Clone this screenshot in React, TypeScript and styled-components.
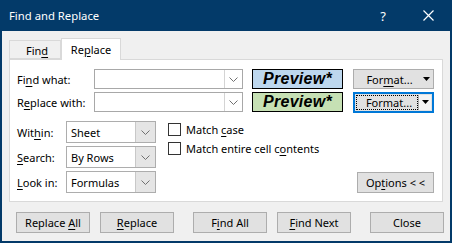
import React from "react"
import styled, { createGlobalStyle } from "styled-components"

const GlobalStyle = createGlobalStyle`
  html, body {
    margin: 0;
    padding: 0;
    background: #ffffff;
  }
  body {
    font-family: "Noto Sans", "Open Sans", sans-serif;
    font-size: 11px;
    color: #000;
  }
  u {
    text-decoration: underline;
    text-underline-offset: 2px;
  }
`

const Window = styled.div`
  width: 452px;
  height: 243px;
  box-sizing: border-box;
  background: #033a69;
  padding: 0 2px 2px 2px;
  display: flex;
  flex-direction: column;
`

const TitleBar = styled.div`
  height: 31px;
  display: flex;
  align-items: center;
  padding-left: 7px;
  color: #ffffff;
  font-size: 11.3px;
`

const Title = styled.div`
  flex: 1;
`

const TitleButton = styled.div<{ $w: number }>`
  width: ${(p) => p.$w}px;
  height: 31px;
  display: flex;
  align-items: center;
  justify-content: center;
  color: #ffffff;
  font-size: 13px;
`

const Body = styled.div`
  flex: 1;
  background: #f0f0f0;
  padding: 7px 6px 8px 7px;
  display: flex;
  flex-direction: column;
`

const Tabs = styled.div`
  height: 21px;
  display: flex;
  align-items: flex-end;
  position: relative;
  z-index: 1;
`

const Tab = styled.div<{ $active?: boolean; $w: number }>`
  width: ${(p) => p.$w}px;
  box-sizing: border-box;
  height: ${(p) => (p.$active ? 22 : 19)}px;
  margin-bottom: ${(p) => (p.$active ? -1 : 0)}px;
  background: ${(p) => (p.$active ? "#ffffff" : "#f0f0f0")};
  border: 1px solid #d9d9d9;
  border-bottom: ${(p) => (p.$active ? "none" : "1px solid #d9d9d9")};
  display: flex;
  align-items: center;
  justify-content: center;
  padding-top: ${(p) => (p.$active ? 0 : 2)}px;
  padding-left: ${(p) => (p.$active ? 0 : 4)}px;
`

const Panel = styled.div`
  width: 434px;
  height: 143px;
  box-sizing: border-box;
  background: #ffffff;
  border: 1px solid #d9d9d9;
  padding: 9px 8px 8px 7px;
  display: flex;
  flex-direction: column;
`

const Row = styled.div<{ $mt?: number }>`
  display: flex;
  align-items: center;
  height: 20px;
  margin-top: ${(p) => p.$mt || 0}px;
`

const Label = styled.div<{ $w: number }>`
  width: ${(p) => p.$w}px;
  white-space: nowrap;
`

const Combo = styled.div`
  width: 149px;
  height: 20px;
  box-sizing: border-box;
  border: 1px solid #a8a8a8;
  background: #ffffff;
  display: flex;
  justify-content: flex-end;
`

const ComboArrow = styled.div`
  width: 18px;
  height: 18px;
  box-sizing: border-box;
  border-left: 1px solid #d4d4d4;
  display: flex;
  align-items: center;
  justify-content: center;
`

const Preview = styled.div<{ $bg: string }>`
  width: 91px;
  height: 20px;
  box-sizing: border-box;
  margin-left: 9px;
  border: 1px solid #000;
  background: ${(p) => p.$bg};
  display: flex;
  align-items: center;
  justify-content: center;
  font-family: "Liberation Sans", Arial, sans-serif;
  font-weight: 700;
  font-style: italic;
  font-size: 16px;
  letter-spacing: 0.3px;
`

const FormatButton = styled.div<{ $focus?: boolean }>`
  width: 81px;
  height: ${(p) => (p.$focus ? 21 : 20)}px;
  box-sizing: border-box;
  margin-left: 10px;
  background: #e1e1e1;
  border: ${(p) => (p.$focus ? "2px solid #0078d7" : "1px solid #adadad")};
  display: flex;
  align-items: center;
  padding: ${(p) => (p.$focus ? "1px" : "0")};
`

const FormatText = styled.div<{ $focus?: boolean }>`
  flex: 1;
  height: 100%;
  box-sizing: border-box;
  display: flex;
  align-items: center;
  justify-content: center;
  padding-left: ${(p) => (p.$focus ? 4 : 6)}px;
  outline: ${(p) => (p.$focus ? "1px dotted #000" : "none")};
  outline-offset: -1px;
`

const FormatArrow = styled.div<{ $focus?: boolean }>`
  width: ${(p) => (p.$focus ? 12 : 14)}px;
  height: 100%;
  display: flex;
  align-items: center;
  justify-content: center;
  border-left: ${(p) => (p.$focus ? "1px solid #adadad" : "none")};
  background: ${(p) => (p.$focus ? "#f4f4f4" : "transparent")};
`

const Lower = styled.div`
  display: flex;
  margin-top: 9px;
  flex: 1;
`

const SelectGrid = styled.div`
  display: grid;
  grid-template-columns: 49px 90px;
  grid-auto-rows: 22px;
  row-gap: 3px;
  align-items: center;
`

const Select = styled.div`
  height: 22px;
  box-sizing: border-box;
  border: 1px solid #adadad;
  background: #ffffff;
  display: flex;
  align-items: center;
`

const SelectText = styled.div`
  flex: 1;
  padding-left: 4px;
`

const SelectArrow = styled.div`
  width: 20px;
  height: 20px;
  box-sizing: border-box;
  background: #e5e5e5;
  border-left: 1px solid #c8c8c8;
  display: flex;
  align-items: center;
  justify-content: center;
`

const Checks = styled.div`
  margin-left: 12px;
  padding-top: 2px;
  display: flex;
  flex-direction: column;
  gap: 6px;
  flex: 1;
`

const CheckRow = styled.div`
  display: flex;
  align-items: center;
  height: 13px;
  gap: 5px;
  white-space: nowrap;
`

const CheckBox = styled.div`
  width: 13px;
  height: 13px;
  box-sizing: border-box;
  border: 1px solid #333333;
  background: #ffffff;
`

const OptionsWrap = styled.div`
  display: flex;
  align-items: flex-end;
`

const Button = styled.div<{ $w: number }>`
  width: ${(p) => p.$w}px;
  height: 21px;
  box-sizing: border-box;
  background: #e1e1e1;
  border: 1px solid #adadad;
  display: flex;
  align-items: center;
  justify-content: center;
  white-space: nowrap;
`

const ButtonRow = styled.div`
  display: flex;
  margin-top: 10px;
  padding-left: 7px;
`

const Gap = styled.div<{ $w: number }>`
  width: ${(p) => p.$w}px;
`

const Chevron = () => (
  <svg width="9" height="5" viewBox="0 0 9 5">
    <path d="M0.5 0.5 L4.5 4.5 L8.5 0.5" fill="none" stroke="#707070" strokeWidth="1" />
  </svg>
)

const DropTri = () => (
  <svg width="7" height="4" viewBox="0 0 7 4">
    <path d="M0 0 H7 L3.5 4 Z" fill="#000" />
  </svg>
)

const App = () => {
  return (
    <>
      <GlobalStyle />
      <Window>
        <TitleBar>
          <Title>Find and Replace</Title>
          <TitleButton $w={20}>?</TitleButton>
          <Gap $w={25} />
          <TitleButton $w={20}>
            <svg width="11" height="11" viewBox="0 0 11 11">
              <path d="M0.5 0.5 L10.5 10.5 M10.5 0.5 L0.5 10.5" stroke="#fff" strokeWidth="1.2" />
            </svg>
          </TitleButton>
          <Gap $w={12} />
        </TitleBar>
        <Body>
          <Tabs>
            <Tab $w={52}>
              <span>
                Fin<u>d</u>
              </span>
            </Tab>
            <Tab $active $w={60}>
              <span>
                Re<u>p</u>lace
              </span>
            </Tab>
          </Tabs>
          <Panel>
            <Row>
              <Label $w={77}>
                Fi<u>n</u>d what:
              </Label>
              <Combo>
                <ComboArrow>
                  <Chevron />
                </ComboArrow>
              </Combo>
              <Preview $bg="#bdd7ee">Preview*</Preview>
              <FormatButton>
                <FormatText>
                  <span>
                    For<u>m</u>at...
                  </span>
                </FormatText>
                <FormatArrow>
                  <DropTri />
                </FormatArrow>
              </FormatButton>
            </Row>
            <Row $mt={3}>
              <Label $w={77}>
                R<u>e</u>place with:
              </Label>
              <Combo>
                <ComboArrow>
                  <Chevron />
                </ComboArrow>
              </Combo>
              <Preview $bg="#c6e0b4">Preview*</Preview>
              <FormatButton $focus>
                <FormatText $focus>
                  <span>Format...</span>
                </FormatText>
                <FormatArrow $focus>
                  <DropTri />
                </FormatArrow>
              </FormatButton>
            </Row>
            <Lower>
              <SelectGrid>
                <Label $w={49}>
                  Wit<u>h</u>in:
                </Label>
                <Select>
                  <SelectText>Sheet</SelectText>
                  <SelectArrow>
                    <Chevron />
                  </SelectArrow>
                </Select>
                <Label $w={49}>
                  <u>S</u>earch:
                </Label>
                <Select>
                  <SelectText>By Rows</SelectText>
                  <SelectArrow>
                    <Chevron />
                  </SelectArrow>
                </Select>
                <Label $w={49}>
                  <u>L</u>ook in:
                </Label>
                <Select>
                  <SelectText>Formulas</SelectText>
                  <SelectArrow>
                    <Chevron />
                  </SelectArrow>
                </Select>
              </SelectGrid>
              <Checks>
                <CheckRow>
                  <CheckBox />
                  <span>
                    Match <u>c</u>ase
                  </span>
                </CheckRow>
                <CheckRow>
                  <CheckBox />
                  <span>
                    Match entire cell c<u>o</u>ntents
                  </span>
                </CheckRow>
              </Checks>
              <OptionsWrap>
                <Button $w={77}>
                  <span>
                    Op<u>t</u>ions &lt; &lt;
                  </span>
                </Button>
              </OptionsWrap>
            </Lower>
          </Panel>
          <ButtonRow>
            <Button $w={74}>
              <span>
                Replace <u>A</u>ll
              </span>
            </Button>
            <Gap $w={10} />
            <Button $w={74}>
              <span>
                <u>R</u>eplace
              </span>
            </Button>
            <Gap $w={19} />
            <Button $w={74}>
              <span>
                F<u>i</u>nd All
              </span>
            </Button>
            <Gap $w={10} />
            <Button $w={74}>
              <span>
                <u>F</u>ind Next
              </span>
            </Button>
            <Gap $w={19} />
            <Button $w={74}>Close</Button>
          </ButtonRow>
        </Body>
      </Window>
    </>
  )
}

export default App
